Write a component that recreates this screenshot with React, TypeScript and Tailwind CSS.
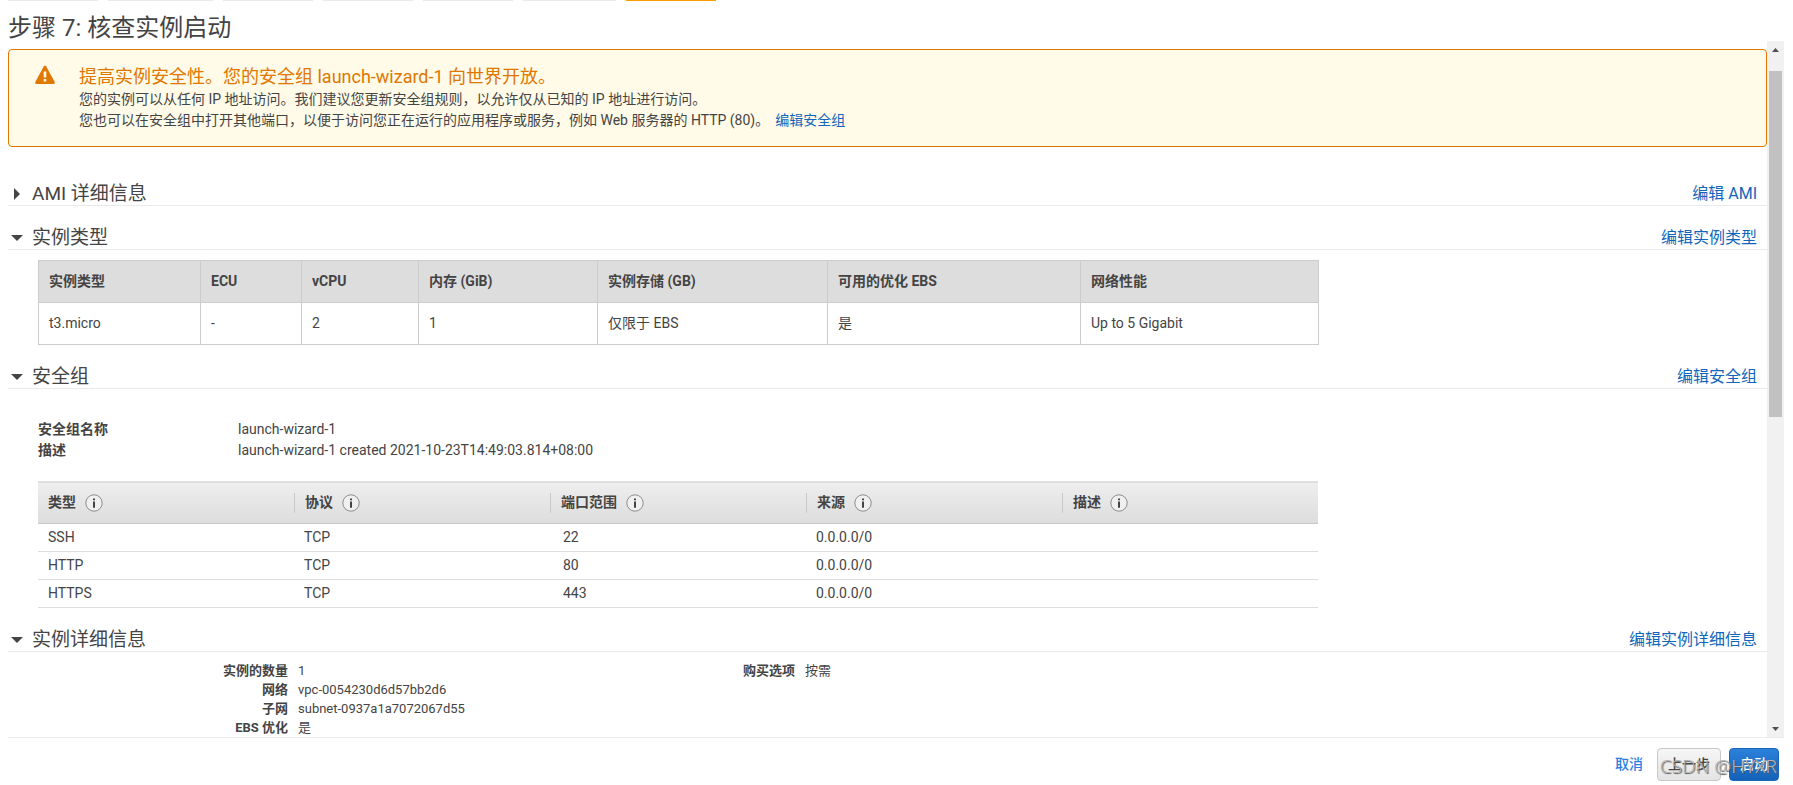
import type { ReactNode } from 'react';

const wizardTabs = [
  { id: 1, className: 'w-[90px] bg-[#eaeaea]' },
  { id: 2, className: 'w-[105px] bg-[#eaeaea]' },
  { id: 3, className: 'w-[90px] bg-[#eaeaea]' },
  { id: 4, className: 'w-[90px] bg-[#eaeaea]' },
  { id: 5, className: 'w-[90px] bg-[#eaeaea]' },
  { id: 6, className: 'w-[93px] bg-[#eaeaea]' },
  { id: 7, className: 'w-[90px] bg-[#ff9900]' },
];

const instanceColumns = [
  { label: '实例类型', value: 't3.micro', width: 'w-[162px]' },
  { label: 'ECU', value: '-', width: 'w-[101px]' },
  { label: 'vCPU', value: '2', width: 'w-[117px]' },
  { label: '内存 (GiB)', value: '1', width: 'w-[179px]' },
  { label: '实例存储 (GB)', value: '仅限于 EBS', width: 'w-[230px]' },
  { label: '可用的优化 EBS', value: '是', width: 'w-[253px]' },
  { label: '网络性能', value: 'Up to 5 Gigabit', width: 'w-[238px]' },
];

const ruleColumns = ['类型', '协议', '端口范围', '来源', '描述'];

const rules = [
  { type: 'SSH', protocol: 'TCP', port: '22', source: '0.0.0.0/0', description: '' },
  { type: 'HTTP', protocol: 'TCP', port: '80', source: '0.0.0.0/0', description: '' },
  { type: 'HTTPS', protocol: 'TCP', port: '443', source: '0.0.0.0/0', description: '' },
];

const details = [
  { label: '实例的数量', value: '1' },
  { label: '网络', value: 'vpc-0054230d6d57bb2d6' },
  { label: '子网', value: 'subnet-0937a1a7072067d55' },
  { label: 'EBS 优化', value: '是' },
];

const WarningIcon = () => (
  <svg width="20" height="20" viewBox="0 0 20 20" className="block shrink-0" aria-hidden="true">
    <path d="M8.9 1.2Q10 -0.4 11.1 1.2L19.6 16.8Q20.2 19 18.4 19H1.6Q-0.2 19 0.4 16.8Z" fill="#e07700" />
    <path d="M8.7 6.4h2.6v6H8.7zM8.7 14h2.6v2.6H8.7z" fill="#fffbe8" />
  </svg>
);

const InfoIcon = () => (
  <svg width="18" height="18" viewBox="0 0 18 18" className="block" aria-hidden="true">
    <circle cx="9" cy="9" r="8.2" fill="#f0f0f0" stroke="#8c8c8c" strokeWidth="1" />
    <path d="M8 4.5h2v1.7H8zM8 7.4h2v6.3H8z" fill="#444" />
  </svg>
);

const Section = ({
  title,
  linkText,
  open = true,
  children,
}: {
  title: string;
  linkText: string;
  open?: boolean;
  children?: ReactNode;
}) => (
  <section>
    <div className="flex h-6 items-center justify-between border-b border-[#eaeaea] pr-[10px]">
      <h2>
        <button
          type="button"
          aria-expanded={open}
          className="flex cursor-pointer items-center pt-px text-[19px] leading-6"
        >
          <span className="flex w-6 justify-start pl-[3px]">
            {open ? (
              <svg width="12" height="6" viewBox="0 0 12 6" aria-hidden="true">
                <path d="M0 0H12L6 6Z" fill="#444" />
              </svg>
            ) : (
              <svg width="10" height="12" viewBox="0 0 10 12" aria-hidden="true">
                <path d="M3 0L9 6L3 12Z" fill="#444" />
              </svg>
            )}
          </span>
          {title}
        </button>
      </h2>
      <a href="#" className="text-base leading-6 text-[#1166bb]">
        {linkText}
      </a>
    </div>
    {children}
  </section>
);

const ScrollRail = () => (
  <div className="flex w-[17px] shrink-0 flex-col items-center justify-between bg-[#f1f1f1]" aria-hidden="true">
    <div className="flex h-[17px] items-center">
      <svg width="7" height="4" viewBox="0 0 7 4">
        <path d="M0 4L3.5 0L7 4Z" fill="#505050" />
      </svg>
    </div>
    <div className="flex w-full grow flex-col px-[2px] pt-[13px]">
      <div className="h-[53.3%] bg-[#c1c1c1]" />
    </div>
    <div className="flex h-[17px] items-center">
      <svg width="7" height="4" viewBox="0 0 7 4">
        <path d="M0 0L3.5 4L7 0Z" fill="#505050" />
      </svg>
    </div>
  </div>
);

const App = () => {
  return (
    <div className="flex h-screen flex-col overflow-hidden bg-white pr-[9px] pl-2 font-[Roboto,'Noto_Sans_CJK_SC',sans-serif] text-sm leading-[21px] text-[#444]">
      {/* bottom edge of the wizard steps */}
      <div className="flex h-px shrink-0 gap-[10px]">
        {wizardTabs.map((tab) => (
          <div key={tab.id} className={tab.className} />
        ))}
      </div>

      <h1 className="h-10 shrink-0 pt-[11px] text-2xl leading-8">步骤 7: 核查实例启动</h1>

      <div className="flex min-h-0 grow border-b border-[#eaeaea]">
        <main className="min-w-0 grow overflow-hidden pt-2">
          {/* security warning */}
          <div className="flex h-[98px] gap-6 rounded border border-[#e07700] bg-[#fffbe8] pt-[15px] pl-[26px]">
            <WarningIcon />
            <div>
              <h2 className="text-lg leading-6 text-[#e07700]">
                提高实例安全性。您的安全组 launch-wizard-1 向世界开放。
              </h2>
              <p>您的实例可以从任何 IP 地址访问。我们建议您更新安全组规则，以允许仅从已知的 IP 地址进行访问。</p>
              <p>
                您也可以在安全组中打开其他端口，以便于访问您正在运行的应用程序或服务，例如 Web 服务器的 HTTP (80)。
                <a href="#" className="ml-[6px] text-[#1166bb]">
                  编辑安全组
                </a>
              </p>
            </div>
          </div>

          <div className="flex flex-col gap-5 pt-[35px]">
            <Section title="AMI 详细信息" linkText="编辑 AMI" open={false} />

            <Section title="实例类型" linkText="编辑实例类型">
              <table className="mt-[10px] ml-[30px] w-[1280px] table-fixed border-collapse border border-[#ccc] text-left">
                <thead>
                  <tr className="h-[42px] bg-[#ddd]">
                    {instanceColumns.map((col) => (
                      <th key={col.label} className={`${col.width} border border-[#ccc] px-[10px] font-bold`}>
                        {col.label}
                      </th>
                    ))}
                  </tr>
                </thead>
                <tbody>
                  <tr className="h-[42px]">
                    {instanceColumns.map((col) => (
                      <td key={col.label} className="border border-[#ccc] px-[10px]">
                        {col.value}
                      </td>
                    ))}
                  </tr>
                </tbody>
              </table>
            </Section>

            <Section title="安全组" linkText="编辑安全组">
              <dl className="mt-[30px] ml-[30px] grid grid-cols-[200px_1fr]">
                <dt className="font-bold">安全组名称</dt>
                <dd>launch-wizard-1</dd>
                <dt className="font-bold">描述</dt>
                <dd>launch-wizard-1 created 2021-10-23T14:49:03.814+08:00</dd>
              </dl>

              <table className="mt-5 ml-[30px] w-[1280px] table-fixed border-collapse text-left">
                <thead>
                  <tr className="h-[42px] border-t border-b border-t-[#e2e2e2] border-b-[#c8c8c8] bg-linear-to-b from-[#eee] to-[#ddd]">
                    {ruleColumns.map((label, i) => (
                      <th key={label} className="p-0 font-bold">
                        <div
                          className={`flex h-5 items-center gap-[9px] pl-[10px] ${i > 0 ? 'border-l border-[#c8c8c8]' : ''}`}
                        >
                          {label}
                          <InfoIcon />
                        </div>
                      </th>
                    ))}
                  </tr>
                </thead>
                <tbody>
                  {rules.map((rule) => (
                    <tr key={rule.type} className="h-7 border-b border-[#ddd]">
                      <td className="py-0 pl-[10px]">{rule.type}</td>
                      <td className="py-0 pl-[10px]">{rule.protocol}</td>
                      <td className="py-0 pl-[13px]">{rule.port}</td>
                      <td className="py-0 pl-[10px]">{rule.source}</td>
                      <td className="py-0 pl-[10px]">{rule.description}</td>
                    </tr>
                  ))}
                </tbody>
              </table>
            </Section>

            <Section title="实例详细信息" linkText="编辑实例详细信息">
              <div className="flex pt-[9px] text-[13px] leading-[19px]">
                <dl className="grid w-[507px] grid-cols-[280px_1fr] gap-x-[10px]">
                  {details.map((item) => (
                    <div key={item.label} className="contents">
                      <dt className="text-right font-bold">{item.label}</dt>
                      <dd>{item.value}</dd>
                    </div>
                  ))}
                </dl>
                <dl className="grid grid-cols-[280px_1fr] gap-x-[10px]">
                  <dt className="text-right font-bold">购买选项</dt>
                  <dd>按需</dd>
                </dl>
              </div>
            </Section>
          </div>
        </main>
        <ScrollRail />
      </div>

      <footer className="relative flex h-[47px] shrink-0 items-start justify-end gap-2 pt-[10px] pr-[5px]">
        <a href="#" className="mr-[6px] leading-[33px] font-medium text-[#2a7de1]">
          取消
        </a>
        <button
          type="button"
          className="h-[33px] w-16 cursor-pointer rounded border border-[#c8c8c8] bg-linear-to-b from-[#f6f6f6] to-[#e4e4e4] font-medium"
        >
          上一步
        </button>
        <button
          type="button"
          className="h-[33px] w-[50px] cursor-pointer rounded border border-[#1a66b8] bg-linear-to-b from-[#2b80d9] to-[#1462b8] font-medium text-white"
        >
          启动
        </button>
        <span className="pointer-events-none absolute top-4 right-[7px] font-['Noto_Sans',sans-serif] text-[19px] leading-6 font-light whitespace-nowrap text-[#b4b4b4] [text-shadow:1px_1px_1px_#555]">
          CSDN @HYXR
        </span>
      </footer>
    </div>
  );
};

export default App;
